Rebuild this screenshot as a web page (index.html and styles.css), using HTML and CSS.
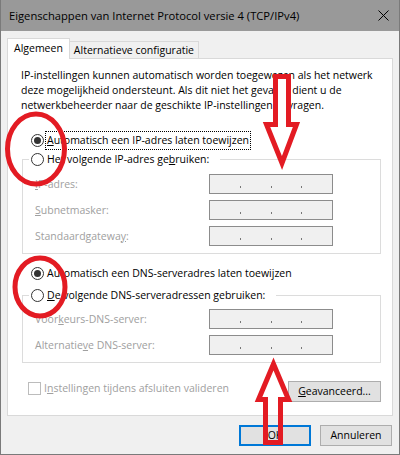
FILE: index.html
```html
<!DOCTYPE html>
<html lang="nl">
<head>
  <meta charset="UTF-8" />
  <title>Eigenschappen van Internet Protocol versie 4 (TCP/IPv4)</title>
  <link rel="stylesheet" href="styles.css">
</head>
<body>

  <div class="window">
    <div class="titlebar">
      <span class="title">Eigenschappen van Internet Protocol versie 4 (TCP/IPv4)</span>
      <svg class="close" width="11" height="11" viewBox="0 0 11 11">
        <path d="M0.5 0.5 L10.5 10.5 M10.5 0.5 L0.5 10.5" stroke="#000" stroke-width="1" fill="none"/>
      </svg>
    </div>

    <div class="tabs">
      <div class="tab active">Algemeen</div>
      <div class="tab">Alternatieve configuratie</div>
    </div>

    <div class="panel">
      <p class="intro">IP-instellingen kunnen automatisch worden toegewezen als het netwerk<br>deze mogelijkheid ondersteunt. Als dit niet het geval is, dient u de<br>netwerkbeheerder naar de geschikte IP-instellingen te vragen.</p>

      <div class="opt first">
        <span class="radio on"></span>
        <span class="txt focus"><u>A</u>utomatisch een IP-adres laten toewijzen</span>
      </div>
      <fieldset class="group">
        <legend class="opt legend">
          <span class="radio"></span>
          <span class="txt">Het volgende IP-adres ge<u>b</u>ruiken:</span>
        </legend>
        <div class="frow top"><span class="lbl"><u>I</u>P-adres:</span><div class="ip"><i></i><i></i><i></i></div></div>
        <div class="frow"><span class="lbl"><u>S</u>ubnetmasker:</span><div class="ip"><i></i><i></i><i></i></div></div>
        <div class="frow"><span class="lbl">Standaardgatewa<u>y</u>:</span><div class="ip"><i></i><i></i><i></i></div></div>
      </fieldset>

      <div class="opt dns">
        <span class="radio on"></span>
        <span class="txt">Automatisch een DNS-serveradres laten toewijzen</span>
      </div>
      <fieldset class="group dns">
        <legend class="opt legend">
          <span class="radio"></span>
          <span class="txt"><u>D</u>e volgende DNS-serveradressen gebruiken:</span>
        </legend>
        <div class="frow top"><span class="lbl">Voor<u>k</u>eurs-DNS-server:</span><div class="ip"><i></i><i></i><i></i></div></div>
        <div class="frow"><span class="lbl">Alternatie<u>v</u>e DNS-server:</span><div class="ip"><i></i><i></i><i></i></div></div>
      </fieldset>

      <div class="foot">
        <div class="check"><span class="box"></span>I<u>n</u>stellingen tijdens afsluiten valideren</div>
        <button class="btn wide"><u>G</u>eavanceerd...</button>
      </div>
    </div>

    <div class="actions">
      <button class="btn default">OK</button>
      <button class="btn">Annuleren</button>
    </div>
  </div>

  <svg class="marks" width="400" height="455" viewBox="0 0 400 455">
    <g fill="none" stroke="#e31b23" stroke-width="5">
      <ellipse cx="36" cy="149" rx="28.5" ry="35"/>
      <ellipse cx="40" cy="287" rx="25" ry="29"/>
      <path d="M275.5 76.5 H288.5 V124.5 H296.5 L282 163 L266.5 124.5 H275.5 Z" fill="#fff"/>
      <path d="M273.5 364 L288.5 399.5 H280.5 V442.5 H265.5 V399.5 H258.5 Z"/>
    </g>
  </svg>

</body>
</html>
```

FILE: styles.css
```css
* {
  box-sizing: border-box;
}
body {
  margin: 0;
  font-family: "Open Sans", "Liberation Sans", sans-serif;
  font-size: 10.5px;
  color: #000;
  background: #fff;
  white-space: nowrap;
}
.window {
  width: 400px;
  height: 455px;
  display: flex;
  flex-direction: column;
  border: 1px solid #7a7a7a;
  border-top: none;
  background: #f0f0f0;
}
.titlebar {
  height: 31px;
  flex: none;
  display: flex;
  align-items: center;
  padding: 0 10px 0 8px;
  background: #999;
}
.title {
  font-size: 11.2px;
  line-height: 15px;
}
.close {
  margin-left: auto;
}
.tabs {
  display: flex;
  align-items: flex-end;
  margin: 7px 0 0 6px;
}
.tab {
  height: 17px;
  padding: 1px 4px 0;
  line-height: 15px;
  border: 1px solid #d9d9d9;
  border-left: none;
  border-bottom: none;
  background: #f0f0f0;
}
.tab.active {
  position: relative;
  z-index: 1;
  height: 21px;
  margin-bottom: -1px;
  padding: 2px 6px 0;
  border-left: 1px solid #d9d9d9;
  background: #fff;
}
.panel {
  margin: 0 6px;
  padding: 9px 11px 13px 13px;
  border: 1px solid #d9d9d9;
  background: #fff;
}
.intro {
  margin: 0;
  line-height: 15px;
}
.opt {
  display: flex;
  align-items: center;
  height: 19px;
  margin-left: 10px;
}
.opt.first {
  margin-top: 18px;
}
.opt.dns {
  margin-top: 10px;
}
.radio {
  flex: none;
  display: flex;
  align-items: center;
  justify-content: center;
  width: 13px;
  height: 13px;
  margin-right: 2px;
  border: 1px solid #333;
  border-radius: 50%;
  background: #fff;
}
.radio.on::after {
  content: "";
  width: 7px;
  height: 7px;
  border-radius: 50%;
  background: #333;
}
.txt {
  padding: 1px 1px;
  line-height: 15px;
}
.focus {
  outline: 1px dotted #000;
}
.group {
  min-width: 0;
  margin: 0 0 0 1px;
  padding: 0 0 7px 12px;
  border: 1px solid #dcdcdc;
}
.group.dns {
  margin-top: 3px;
}
.legend {
  margin-left: -6px;
  padding: 0 10px 0 2px;
}
.frow {
  display: flex;
  align-items: center;
  height: 20px;
  margin-top: 6px;
}
.frow.top {
  margin-top: 5px;
}
.group.dns .frow.top {
  margin-top: 4px;
}
.lbl {
  width: 174px;
  line-height: 15px;
  color: #a0a0a0;
}
.ip {
  display: flex;
  justify-content: space-evenly;
  align-items: center;
  width: 124px;
  height: 20px;
  padding-top: 5px;
  border: 1px solid #8c8c8c;
  background: #f0f0f0;
}
.ip i {
  width: 1px;
  height: 2px;
  background: #777;
}
.foot {
  display: flex;
  justify-content: space-between;
  align-items: flex-start;
  margin-top: 18px;
}
.check {
  display: flex;
  align-items: center;
  height: 15px;
  margin-left: 7px;
  line-height: 15px;
  color: #a0a0a0;
}
.box {
  width: 13px;
  height: 13px;
  margin-right: 3px;
  border: 1px solid #bcbcbc;
  background: #fff;
}
.btn {
  height: 21px;
  padding: 0;
  font: inherit;
  line-height: 17px;
  color: #000;
  border: 1px solid #adadad;
  background: #e1e1e1;
}
.btn.wide {
  width: 93px;
}
.actions {
  display: flex;
  justify-content: flex-end;
  gap: 9px;
  margin-top: 9px;
  padding-right: 7px;
}
.actions .btn {
  width: 72px;
}
.btn.default {
  border-color: #0078d7;
  box-shadow: inset 0 0 0 1px #0078d7;
}
.marks {
  position: absolute;
  left: 0;
  top: 0;
  pointer-events: none;
}
```
